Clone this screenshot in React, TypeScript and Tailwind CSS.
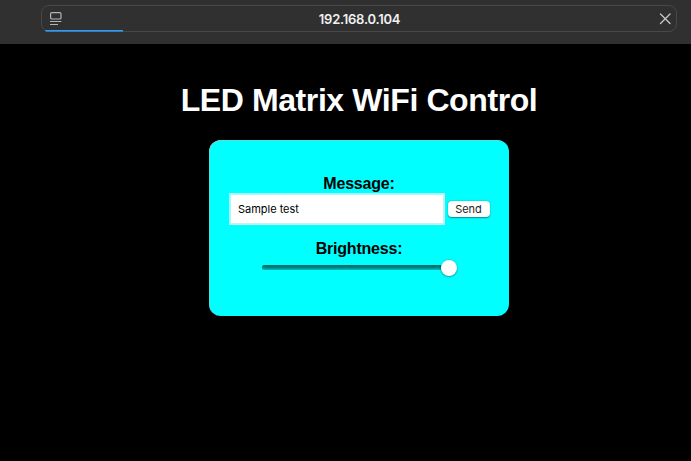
import { useState } from "react";

function AddressBar() {
  return (
    <header className="h-11 bg-[#303030] pt-[5px] pr-[14px] pl-[41px]">
      <div className="relative flex h-[27px] items-center justify-between rounded-lg border border-[#484848] pr-[5px] pl-2">
        <svg className="h-[14px] w-3" viewBox="0 0 12 14" fill="none" stroke="#b4b4b4">
          <rect x="0.6" y="0.6" width="10.4" height="6.4" rx="1.3" strokeWidth="1.2" />
          <path d="M0 9.5H11.4M0 12.5H8" strokeWidth="1.2" />
        </svg>
        <span className="-translate-x-px font-['Inter',sans-serif] text-[13px] leading-4 font-semibold tracking-[-0.24px] text-[#f0f0f0]">
          192.168.0.104
        </span>
        <svg className="h-3 w-3" viewBox="0 0 12 12" fill="none" stroke="#c8c8c8" strokeWidth="1.3" strokeLinecap="round">
          <path d="M1.5 1L11 10.5M11 1L1.5 10.5" />
        </svg>
        <div className="absolute bottom-[-1px] left-[3px] h-[2px] w-[78px] rounded-bl-sm bg-gradient-to-b from-[#4aa3e6] to-[#1474c4]" />
      </div>
    </header>
  );
}

export default function App() {
  const [message, setMessage] = useState("Sample test");
  const label = "h-[19px] text-base leading-[19px] font-bold tracking-[-0.2px] text-black";
  return (
    <div className="flex h-[461px] w-[691px] flex-col overflow-hidden bg-black font-['Liberation_Sans',Arial,sans-serif]">
      <AddressBar />
      <main className="flex flex-col items-center pl-[27px]">
        <h1 className="mt-[37px] h-[38px] text-[32px] leading-[38px] font-bold tracking-[-0.4px] whitespace-nowrap text-white">
          LED Matrix WiFi Control
        </h1>
        <form
          className="mt-[21px] flex h-[175.5px] w-[300px] flex-col items-center rounded-xl bg-[#00ffff] pt-[34px] shadow-[inset_0.5px_0.5px_0_#a0c8c8]"
          onSubmit={(e) => e.preventDefault()}
        >
          <label htmlFor="message" className={label}>Message:</label>
          <div className="flex items-center gap-[3px]">
            <input
              id="message"
              value={message}
              onChange={(e) => setMessage(e.target.value)}
              className="h-8 w-[216px] border-2 border-t-[#a8fafa] border-r-[#c8eeee] border-b-[#c8eeee] border-l-[#a8fafa] bg-white pr-[7px] pl-[7.5px] font-['Inter',sans-serif] text-[11px] tracking-[-0.02px] text-black outline-none"
            />
            <button className="h-4 w-[42px] rounded bg-white font-['Inter',sans-serif] text-[11px] leading-4 text-[#222] shadow-[0_0.5px_1.5px_rgba(0,0,0,0.45)]">
              Send
            </button>
          </div>
          <span className={`${label} mt-[14px]`}>Brightness:</span>
          <div className="mt-px flex h-[17px] w-[195px] items-center">
            <div className="h-[5px] flex-1 rounded-l-xs bg-gradient-to-b from-[#006868] via-[#008080] to-[#00c0c0]" />
            <div className="h-4 w-4 rounded-full bg-white shadow-[0_0.5px_2px_rgba(0,0,0,0.55)]" />
          </div>
        </form>
      </main>
    </div>
  );
}
